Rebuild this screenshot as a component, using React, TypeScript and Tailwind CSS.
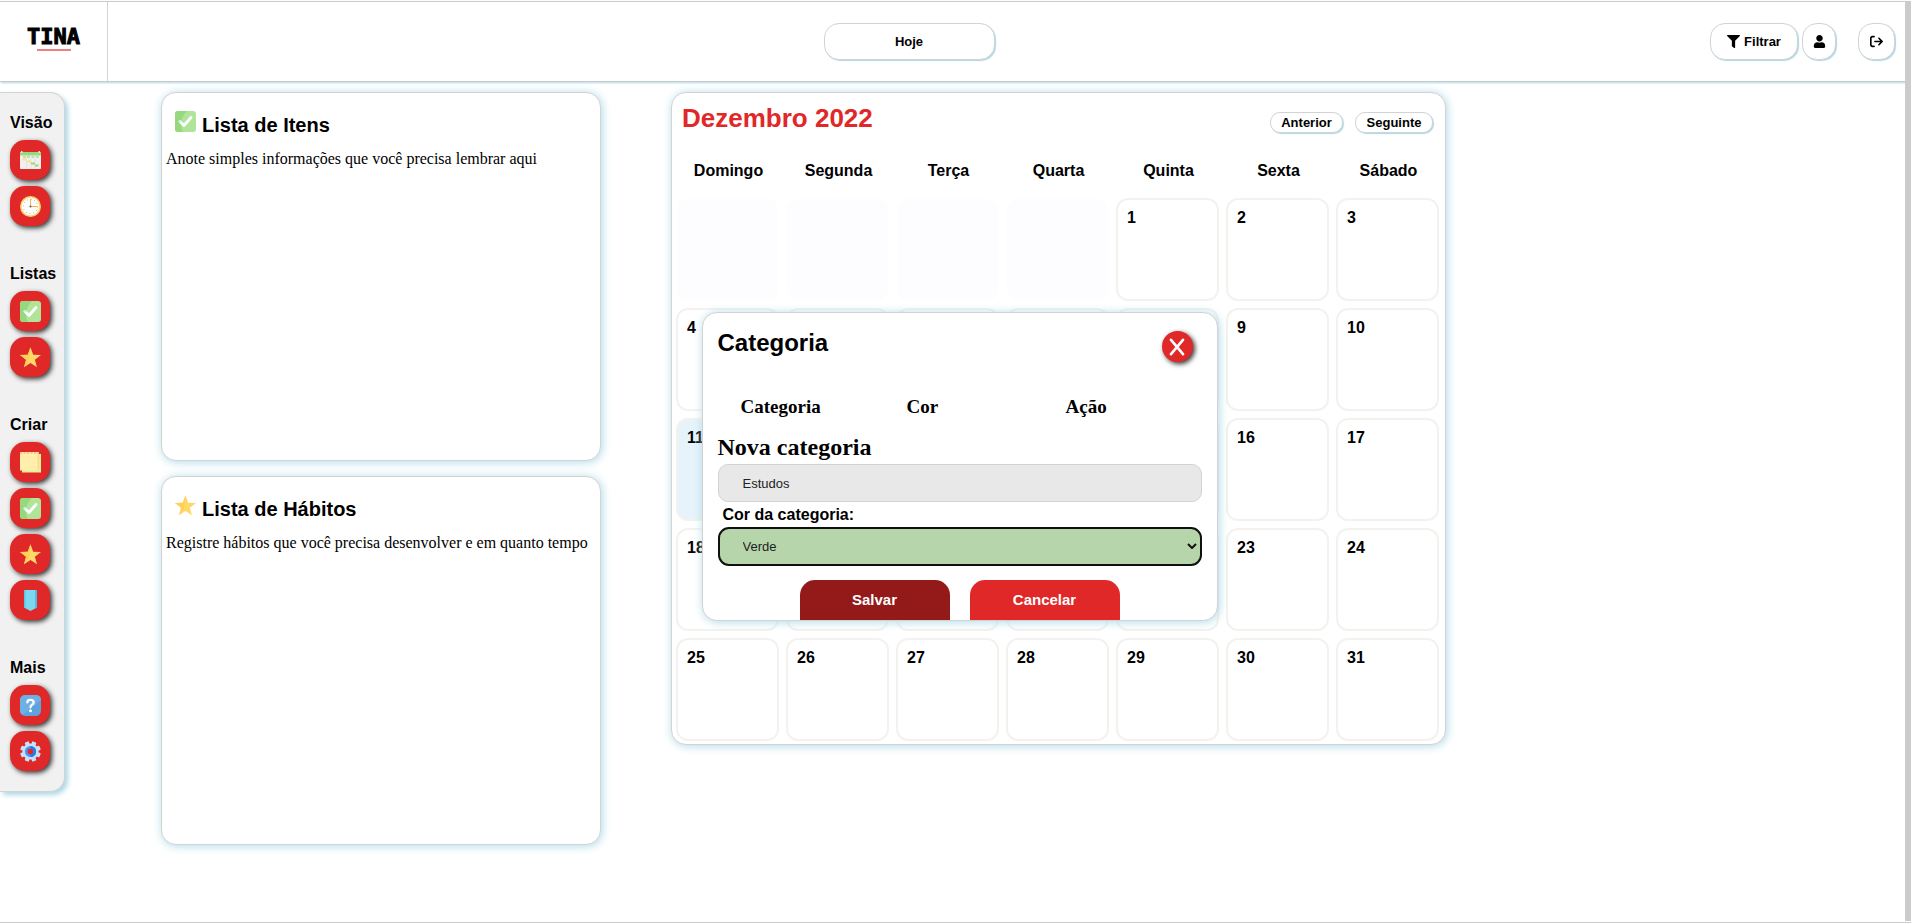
import { useState, type ReactNode } from "react";
import { FaFilter, FaUser } from "react-icons/fa";
import { FaArrowRightFromBracket } from "react-icons/fa6";

function CheckIcon() {
  return (
    <svg viewBox="0 0 21 21" className="size-[21px]" aria-hidden="true">
      <rect width="21" height="21" rx="3" fill="#b0e599" />
      <path d="M3 0H12Q6 6 6 14 6 18 8 21H3Q0 21 0 18V3Q0 0 3 0Z" fill="#98d87d" />
      <path d="M5 10.500L9 14.500 16 6.500" fill="none" stroke="#fff" strokeWidth="2.800" strokeLinecap="round" strokeLinejoin="round" />
      <circle cx="5" cy="10.300" r="1.400" fill="#c3f1fa" />
    </svg>
  );
}

function StarIcon() {
  return (
    <svg viewBox="0 0 21 21" className="size-[21px]" aria-hidden="true">
      <path d="M10.500 0.300L13.200 7.800 21 8 14.900 12.800 17 20.300 10.500 16 4 20.300 6.100 12.800 0 8 7.800 7.800Z" fill="#ffd869" />
      <path d="M10.500 0.300L7.800 7.800 0 8 6.100 12.800 4 20.300 9 13Z" fill="#ffcf57" />
    </svg>
  );
}

function CalendarIcon() {
  return (
    <svg viewBox="0 0 21 21" className="size-[21px]" aria-hidden="true">
      <path d="M0 3H21V18Q21 19 20 19H1Q0 19 0 18Z" fill="#f0f0ee" />
      <path d="M0 2H21V5.500H0Z" fill="#98d87d" />
      <path d="M1 1h1.500v2H1zM18.500 1H20v2h-1.500z" fill="#e4e4e4" />
      <path d="M3 7h3M7 7h3M11.500 7h3M16 7h3" stroke="#8fd07a" strokeWidth="1" />
      <path d="M6.500 8V18M10.800 8V18M15 8V18" stroke="#dcdcdc" strokeWidth="0.600" />
      <path d="M2.500 8.500h4v2h-4zM7 10.500h4v2H7z" fill="#ffdf8a" />
      <path d="M11 12.500h4v2h-4zM15 14.500h3.500v2H15z" fill="#98d87d" />
    </svg>
  );
}

function ClockIcon() {
  return (
    <svg viewBox="0 0 21 21" className="size-[21px]" aria-hidden="true">
      <circle cx="10.500" cy="10.500" r="9.700" fill="#fff" stroke="#ffd469" strokeWidth="1.600" />
      <circle cx="10.500" cy="10.500" r="7.200" fill="none" stroke="#9a9a9a" strokeWidth="0.900" strokeDasharray="0.900 2.870" />
      <path d="M10.500 3V10.500H18" fill="none" stroke="#f5b944" strokeWidth="1" />
      <circle cx="10.500" cy="10.500" r="1.100" fill="#666" />
    </svg>
  );
}

function NoteIcon() {
  return (
    <svg viewBox="0 0 21 21" className="size-[21px]" aria-hidden="true">
      <path d="M2 2H21V20.500H2Z" fill="#e4f09a" />
      <path d="M0 0H19V17L18 18.500H0Z" fill="#ffeeac" />
      <path d="M19 1V17L17.500 18.500V1Z" fill="#ffd88c" />
      <path d="M0 1H19" stroke="#f59a6a" strokeWidth="1" strokeDasharray="2 1.500" />
    </svg>
  );
}

function BookmarkIcon() {
  return (
    <svg viewBox="0 0 21 21" className="size-[21px]" aria-hidden="true">
      <path d="M4 0H17V17.500L10.500 21 4 17.500Z" fill="#7bd8f0" />
      <path d="M4 0H5.500V18.300L4 17.500Z" fill="#5cc4e6" />
      <path d="M15 0H17V17.500L15 18.600Z" fill="#55b9e8" />
    </svg>
  );
}

function HelpIcon() {
  return (
    <svg viewBox="0 0 21 21" className="size-[21px]" aria-hidden="true">
      <rect width="21" height="21" rx="5.500" fill="#5ea3dc" />
      <path d="M5.500 0H15.500Q21 0 21 5L3 19.500Q0 19 0 15.500V5.500Q0 0 5.500 0Z" fill="#6db0e4" />
      <path d="M7.300 7.300Q7.500 4.900 10.500 4.900 13.600 4.900 13.600 7.400 13.600 8.900 12 9.800 10.500 10.700 10.500 12.300" fill="none" stroke="#fff" strokeWidth="2.300" strokeLinecap="round" />
      <circle cx="10.500" cy="15.800" r="1.500" fill="#fff" />
    </svg>
  );
}

function GearIcon() {
  return (
    <svg viewBox="0 0 21 21" className="size-[21px]" aria-hidden="true">
      <g fill="#c4e3fb">
        {[22.5, 67.5, 112.5, 157.5].map((angle) => (
          <rect key={angle} x="8.300" y="0.200" width="4.400" height="20.600" rx="0.800" transform={`rotate(${angle} 10.500 10.500)`} />
        ))}
        <circle cx="10.500" cy="10.500" r="8" />
      </g>
      <circle cx="10.500" cy="10.500" r="4.300" fill="#e02828" stroke="#4a94f7" strokeWidth="2.600" />
      <path d="M10.500 6.200A4.300 4.300 0 0 1 10.500 14.800" fill="none" stroke="#1f7df0" strokeWidth="2.600" />
    </svg>
  );
}

type Tool = { label: string; icon: ReactNode };

const sections: { title: string; tools: Tool[] }[] = [
  {
    title: "Visão",
    tools: [
      { label: "Calendário", icon: <CalendarIcon /> },
      { label: "Relógio", icon: <ClockIcon /> },
    ],
  },
  {
    title: "Listas",
    tools: [
      { label: "Lista de itens", icon: <CheckIcon /> },
      { label: "Lista de hábitos", icon: <StarIcon /> },
    ],
  },
  {
    title: "Criar",
    tools: [
      { label: "Criar nota", icon: <NoteIcon /> },
      { label: "Criar item", icon: <CheckIcon /> },
      { label: "Criar hábito", icon: <StarIcon /> },
      { label: "Criar categoria", icon: <BookmarkIcon /> },
    ],
  },
  {
    title: "Mais",
    tools: [
      { label: "Ajuda", icon: <HelpIcon /> },
      { label: "Configurações", icon: <GearIcon /> },
    ],
  },
];

const weekdays = ["Domingo", "Segunda", "Terça", "Quarta", "Quinta", "Sexta", "Sábado"];
const leadingBlanks = 4;
const today = 11;

const pill =
  "flex items-center justify-center border border-[#d3d3d3] bg-white font-bold shadow-[1px_1px_1px_lightblue]";
const panel = "rounded-[15px] border border-[#d3d3d3] bg-white shadow-[1px_1px_10px_lightblue]";

function Logo() {
  return (
    <a
      href="#inicio"
      className="flex w-[108px] shrink-0 flex-col items-center border-r border-[#d3d3d3] pt-[23px] font-['DejaVu_Sans_Mono',monospace] text-[22px] leading-6 font-bold [-webkit-text-stroke:1px_black]"
    >
      TINA
      <span className="h-0.5 w-[34px] bg-[#f08080]" />
    </a>
  );
}

function Header() {
  return (
    <header className="flex h-[81px] border-y border-[#cbcbcb] shadow-[1px_1px_2px_lightblue]">
      <Logo />
      <div className="flex flex-1 items-start pt-[21px] pr-4 text-[13px]">
        <div className="flex flex-1 justify-center">
          <button type="button" className={`${pill} h-[37px] w-[171px] rounded-[15px]`}>
            Hoje
          </button>
        </div>
        <div className="flex">
          <button type="button" className={`${pill} h-[37px] w-[88px] gap-1 rounded-[15px]`}>
            <FaFilter className="size-[13px]" />
            Filtrar
          </button>
          <button type="button" aria-label="Perfil" className={`${pill} ml-1 h-[37px] w-[34px] rounded-[15px]`}>
            <FaUser className="size-[13px]" />
          </button>
          <button type="button" aria-label="Sair" className={`${pill} ml-[22px] h-[37px] w-[37px] rounded-[15px]`}>
            <FaArrowRightFromBracket className="size-[13px]" />
          </button>
        </div>
      </div>
    </header>
  );
}

function Sidebar() {
  return (
    <nav className="flex w-[65px] shrink-0 flex-col gap-9 rounded-r-[15px] border border-l-0 border-[#d3d3d3] bg-[#f1f1f1] pt-[18px] pb-5 pl-[10px] shadow-[3px_3px_5px_lightblue]">
      {sections.map((section) => (
        <section key={section.title}>
          <h2 className="mb-[5px] text-base leading-6 font-bold">{section.title}</h2>
          <div className="flex flex-col gap-1.5">
            {section.tools.map((tool) => (
              <button
                key={tool.label}
                type="button"
                aria-label={tool.label}
                className="flex size-10 items-center justify-center rounded-[15px] bg-[#e02828] shadow-[2px_2px_5px_#333]"
              >
                {tool.icon}
              </button>
            ))}
          </div>
        </section>
      ))}
    </nav>
  );
}

function ListCard({ icon, title, text }: { icon: ReactNode; title: string; text: string }) {
  return (
    <section className={`${panel} h-[369px]`}>
      <h2 className="flex gap-1.5 pt-[18px] pl-[13px] text-xl leading-7 font-bold">
        {icon}
        {title}
      </h2>
      <p className="pt-2 pl-1 font-['Liberation_Serif',serif] text-base leading-6">{text}</p>
    </section>
  );
}

function Calendar() {
  return (
    <section className={`${panel} w-[775px] pb-[3px]`}>
      <div className="flex items-start justify-between pt-[9px] pr-3 pl-[10px]">
        <h1 className="text-[26px] leading-8 font-bold text-[#e02828]">Dezembro 2022</h1>
        <div className="flex gap-3 pt-[10px] text-[13px]">
          <button type="button" className={`${pill} h-[21px] w-[73px] rounded-[10px]`}>
            Anterior
          </button>
          <button type="button" className={`${pill} h-[21px] w-[78px] rounded-[10px]`}>
            Seguinte
          </button>
        </div>
      </div>
      <div className="grid grid-cols-7 gap-[7px] pt-[25px] pr-[5px] pb-[15px] pl-[5px] text-center text-base leading-6 font-bold">
        {weekdays.map((day) => (
          <span key={day}>{day}</span>
        ))}
      </div>
      <div className="grid auto-rows-[103px] grid-cols-7 gap-[7px] pr-[6px] pl-1 text-base leading-6 font-bold">
        {Array.from({ length: leadingBlanks }, (_, i) => (
          <div key={`blank-${i}`} className="m-px rounded-[10px] bg-[#fdfcff]" />
        ))}
        {Array.from({ length: 31 }, (_, i) => i + 1).map((day) => (
          <div
            key={day}
            className={`rounded-[12px] border-2 border-[#f3f2ee] pt-[6px] pl-[9px] ${day === today ? "bg-[#e6f3fa]" : ""}`}
          >
            {day}
          </div>
        ))}
      </div>
    </section>
  );
}

function CategoryDialog() {
  const [name, setName] = useState("Estudos");
  const [color, setColor] = useState("Verde");
  return (
    <div
      role="dialog"
      aria-labelledby="dialog-title"
      className={`${panel} absolute top-[312px] left-1/2 ml-[-254px] w-[516px] px-[15px]`}
    >
      <div className="flex justify-between pt-[14px]">
        <h2 id="dialog-title" className="text-2xl leading-8 font-bold">
          Categoria
        </h2>
        <button
          type="button"
          aria-label="Fechar"
          className="mt-1 mr-[9px] flex size-[31px] items-center justify-center rounded-full bg-[#e02828] shadow-[2px_2px_5px_#333]"
        >
          <svg viewBox="0 0 16 18" className="h-[18px] w-4" aria-hidden="true">
            <path d="M2 1.800L14 16.200M14 1.800L2 16.200" stroke="#fff" strokeWidth="2.600" strokeLinecap="round" />
          </svg>
        </button>
      </div>
      <table className="mt-[33px] w-full table-fixed text-left font-['Liberation_Serif',serif] text-[19px] leading-6">
        <thead>
          <tr>
            <th className="w-[189px] pl-[23px]">Categoria</th>
            <th className="w-[159px]">Cor</th>
            <th>Ação</th>
          </tr>
        </thead>
      </table>
      <form onSubmit={(event) => event.preventDefault()}>
        <h3 className="mt-3 mb-px font-['Liberation_Serif',serif] text-2xl leading-8 font-bold">Nova categoria</h3>
        <input
          aria-label="Nova categoria"
          value={name}
          onChange={(event) => setName(event.target.value)}
          className="block h-[38px] w-full rounded-[10px] border border-[#d3d3d3] bg-[#e8e8e8] px-6 text-[13px] text-[#222]"
        />
        <label htmlFor="category-color" className="block pl-[5px] text-base leading-[25px] font-bold">
          Cor da categoria:
        </label>
        <div className="relative">
          <select
            id="category-color"
            value={color}
            onChange={(event) => setColor(event.target.value)}
            className="block h-[39px] w-full appearance-none rounded-[11px] border-2 border-[#101010] bg-[#b6d5ab] px-[23px] text-[13px] text-[#222]"
          >
            <option>Verde</option>
            <option>Azul</option>
            <option>Vermelho</option>
          </select>
          <svg viewBox="0 0 10 6" className="pointer-events-none absolute top-4 right-[5px] h-1.5 w-2.5" aria-hidden="true">
            <path d="M1 1L5 5L9 1" fill="none" stroke="#101010" strokeWidth="2" />
          </svg>
        </div>
        <div className="mt-[14px] flex justify-center gap-5 text-[15px] font-bold text-white">
          <button type="submit" className="h-10 w-[150px] rounded-t-[15px] bg-[#941a1a]">
            Salvar
          </button>
          <button type="button" className="h-10 w-[150px] rounded-t-[15px] bg-[#e02828]">
            Cancelar
          </button>
        </div>
      </form>
    </div>
  );
}

export default function App() {
  return (
    <div className="relative flex min-h-screen flex-col border-b border-[#cbcbcb] bg-white pt-px font-['Liberation_Sans',Arial,sans-serif] text-black">
      <Header />
      <main className="flex flex-1 items-start pt-[10px]">
        <Sidebar />
        <div className="ml-24 flex w-[440px] flex-col gap-[15px]">
          <ListCard icon={<CheckIcon />} title="Lista de Itens" text="Anote simples informações que você precisa lembrar aqui" />
          <ListCard
            icon={<StarIcon />}
            title="Lista de Hábitos"
            text="Registre hábitos que você precisa desenvolver e em quanto tempo"
          />
        </div>
        <div className="ml-[70px]">
          <Calendar />
        </div>
      </main>
      <CategoryDialog />
      <div className="absolute top-px right-0 bottom-px w-1.5 bg-[#cbcbcb]" />
    </div>
  );
}
